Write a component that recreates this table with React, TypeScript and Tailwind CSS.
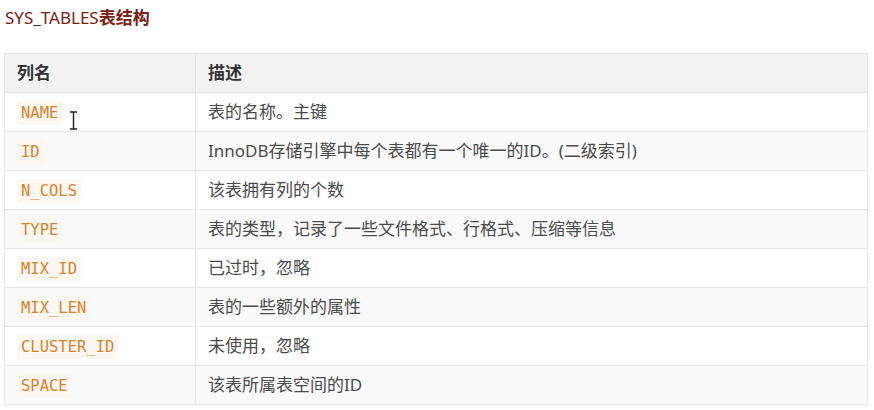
const rows = [
  { name: 'NAME', desc: '表的名称。主键' },
  { name: 'ID', desc: 'InnoDB存储引擎中每个表都有一个唯一的ID。(二级索引)' },
  { name: 'N_COLS', desc: '该表拥有列的个数' },
  { name: 'TYPE', desc: '表的类型，记录了一些文件格式、行格式、压缩等信息' },
  { name: 'MIX_ID', desc: '已过时，忽略' },
  { name: 'MIX_LEN', desc: '表的一些额外的属性' },
  { name: 'CLUSTER_ID', desc: '未使用，忽略' },
  { name: 'SPACE', desc: '该表所属表空间的ID' },
];

function App() {
  return (
    <div className="relative min-h-[410px] bg-white pl-[4px] pt-[6px] font-['Noto_Sans','Noto_Sans_CJK_SC',sans-serif]">
      <h2 className="pl-[1px] text-[17px] leading-6 text-[#7a2010]">
        SYS_TABLES<span className="font-bold">表结构</span>
      </h2>

      <table className="mt-[23px] w-[864px] border-collapse text-[17px]">
        <thead>
          <tr className="h-[39px] bg-[#f2f2f2]">
            <th className="w-[191px] border border-[#e4e4e4] pl-[12px] text-left font-bold text-[#333]">列名</th>
            <th className="border border-[#e4e4e4] pl-[12px] text-left font-bold text-[#333]">描述</th>
          </tr>
        </thead>
        <tbody>
          {rows.map((row, i) => (
            <tr key={row.name} className={i % 2 === 1 ? 'h-[39px] bg-[#fafafa]' : 'h-[39px] bg-white'}>
              <td className="border border-[#e6e6e6] pl-[12px]">
                <code className="rounded-[3px] bg-[#fbf7f2] px-[4px] py-[3px] font-['DejaVu_Sans_Mono','Liberation_Mono',monospace] text-[15.5px] text-[#d9822b]">
                  {row.name}
                </code>
              </td>
              <td className="border border-[#e6e6e6] pl-[12px] text-[#4a4a4a]">{row.desc}</td>
            </tr>
          ))}
        </tbody>
      </table>

      {/* text cursor left over the first row */}
      <svg className="absolute left-[69px] top-[111px]" width="9" height="19" viewBox="0 0 9 19">
        <path d="M1 1h7M4.5 1v17M1 18h7" stroke="#222" strokeWidth="1.4" fill="none" />
      </svg>
    </div>
  );
}

export default App;
